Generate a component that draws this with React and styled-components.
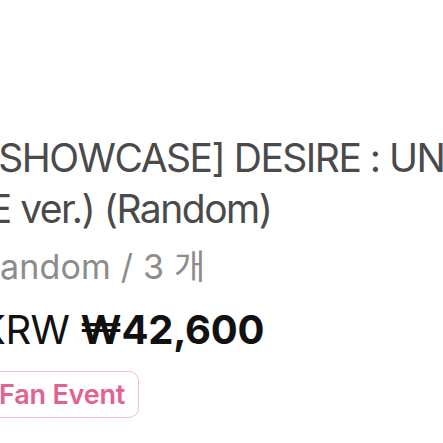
import React from "react";
import styled, { createGlobalStyle } from "styled-components";

const Global = createGlobalStyle`
  html, body { margin: 0; padding: 0; background: #ffffff; }
  body { width: 443px; height: 443px; overflow: hidden; font-family: Inter, "Noto Sans", "Noto Sans CJK KR", sans-serif; }
`;

const Page = styled.div`
  width: 443px;
  height: 443px;
  overflow: hidden;
  background: #ffffff;
`;

const Column = styled.div`
  display: flex;
  flex-direction: column;
  align-items: flex-start;
  margin-left: -24px;
  padding-top: 132px;
`;

const Title = styled.h1`
  margin: 0;
  font-size: 39px;
  line-height: 51px;
  font-weight: 400;
  color: #4a4a4a;
  white-space: nowrap;
  letter-spacing: -1.5px;
`;

const Option = styled.div`
  margin-top: 13px;
  padding-left: 2px;
  font-size: 34px;
  line-height: 40px;
  color: #8c8c8c;
  white-space: nowrap;
  letter-spacing: 0.2px;
  font-family: Inter, "Noto Sans CJK KR", sans-serif;
`;

const Price = styled.div`
  margin-top: 19px;
  padding-left: 3px;
  font-size: 40px;
  line-height: 48px;
  color: #111111;
  white-space: nowrap;
`;

const Currency = styled.span`
  font-weight: 400;
  letter-spacing: -0.5px;
`;

const Amount = styled.span`
  font-weight: 700;
  letter-spacing: -0.3px;
`;

const Badge = styled.span`
  margin-top: 17px;
  display: inline-flex;
  align-items: center;
  height: 47px;
  box-sizing: border-box;
  padding: 0 13px 0 22px;
  border: 1.5px solid #f4bdd1;
  border-radius: 10px;
  font-size: 27px;
  font-weight: 600;
  color: #e3628f;
  letter-spacing: -0.2px;
`;

export default function App() {
  return (
    <Page>
      <Global />
      <Column>
        <Title>
          [ SHOWCASE] DESIRE : UNLEASH
          <br />
          (E ver.) (Random)
        </Title>
        <Option>Random / 3 개</Option>
        <Price>
          <Currency>KRW </Currency>
          <Amount>₩42,600</Amount>
        </Price>
        <Badge>Fan Event</Badge>
      </Column>
    </Page>
  );
}
